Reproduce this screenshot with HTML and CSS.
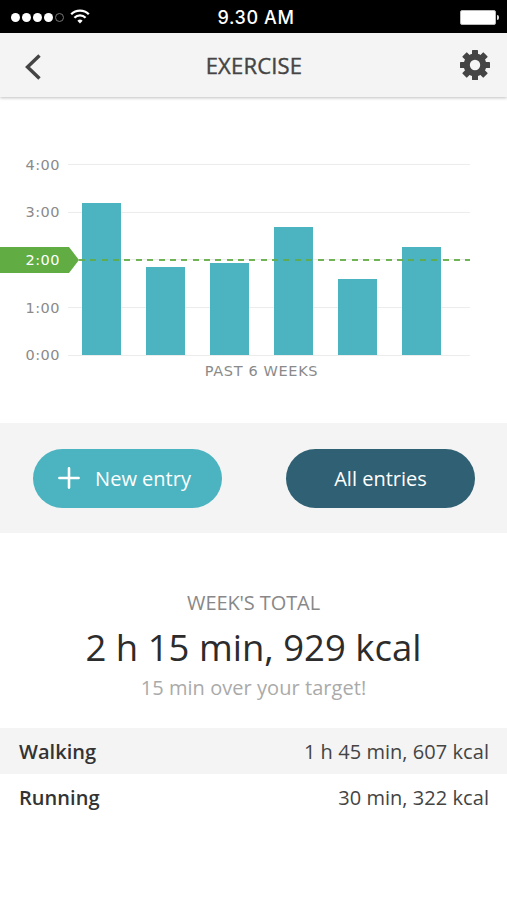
FILE: index.html
```html
<!DOCTYPE html>
<html lang="en">
  <head>
    <meta charset="UTF-8" />
    <meta name="viewport" content="width=device-width, initial-scale=1" />
    <title>Exercise</title>
    <link rel="stylesheet" href="styles.css">
  </head>

  <body>
    <div class="status-bar">
      <div class="signal">
        <i></i><i></i><i></i><i></i><i class="empty"></i>
        <svg class="wifi" width="20" height="15" viewBox="0 0 20 15" fill="none" stroke="#fff" stroke-width="2.3">
          <path d="M1.2 5.2a12.5 12.5 0 0 1 17.6 0" />
          <path d="M4.4 8.7a8 8 0 0 1 11.2 0" />
          <path d="M10 14.4l-2.6-2.7a3.7 3.7 0 0 1 5.2 0z" fill="#fff" stroke="none" />
        </svg>
      </div>
      <div class="clock">9.30 AM</div>
      <div class="battery"></div>
    </div>

    <header>
      <svg class="back" width="18" height="28" viewBox="0 0 18 28" fill="none" stroke="#444" stroke-width="3.4">
        <path d="M15.5 2.5L3.5 14l12 11.5" />
      </svg>
      <h1>Exercise</h1>
      <svg class="settings" width="30" height="30" viewBox="-15 -15 30 30" fill="#444">
        <rect x="-3" y="-15" width="6" height="30" rx="0.6" />
        <rect x="-3.3" y="-15" width="6.6" height="30" rx="0.8" transform="rotate(45)" />
        <rect x="-3" y="-15" width="6" height="30" rx="0.6" transform="rotate(90)" />
        <rect x="-3.3" y="-15" width="6.6" height="30" rx="0.8" transform="rotate(135)" />
        <circle r="11.4" />
        <circle r="5.2" fill="#f4f4f4" />
      </svg>
    </header>

    <section class="chart">
      <div class="plot">
        <div class="tick"><span>4:00</span></div>
        <div class="tick"><span>3:00</span></div>
        <div class="tick"><span></span></div>
        <div class="tick"><span>1:00</span></div>
        <div class="tick"><span>0:00</span></div>
        <div class="bars">
          <div class="bar" style="height: 152px"></div>
          <div class="bar" style="height: 88.5px"></div>
          <div class="bar" style="height: 92.5px"></div>
          <div class="bar" style="height: 128px"></div>
          <div class="bar" style="height: 76.5px"></div>
          <div class="bar" style="height: 108px"></div>
        </div>
        <div class="target">
          <div class="target-tag">2:00</div>
          <div class="target-line"></div>
        </div>
      </div>
      <div class="caption">PAST 6 WEEKS</div>
    </section>

    <div class="actions">
      <button class="new-entry">
        <svg width="22" height="22" viewBox="0 0 22 22" stroke="#fff" stroke-width="2.6" stroke-linecap="round">
          <path d="M11 1.4v19.2M1.4 11h19.2" />
        </svg>
        <span>New entry</span>
      </button>
      <button class="all-entries"><span>All entries</span></button>
    </div>

    <section class="summary">
      <h2>WEEK'S TOTAL</h2>
      <p class="total">2 h 15 min, 929 kcal</p>
      <p class="note">15 min over your target!</p>
    </section>

    <ul class="activities">
      <li><b>Walking</b><span>1 h 45 min, 607 kcal</span></li>
      <li><b>Running</b><span>30 min, 322 kcal</span></li>
    </ul>
  </body>
</html>
```

FILE: styles.css
```css
* {
  box-sizing: border-box;
}

body {
  margin: 0;
  background: #fff;
  color: #333;
  font-family: "Open Sans", sans-serif;
}

.status-bar {
  height: 33px;
  padding: 3px 9px 0 11px;
  display: grid;
  grid-template-columns: 1fr auto 1fr;
  align-items: center;
  background: #000;
  color: #fff;
}

.signal {
  margin-top: -2px;
  display: flex;
  align-items: center;
  gap: 2px;
}

.signal i {
  width: 9px;
  height: 9px;
  border-radius: 50%;
  background: #fff;
}

.signal .empty {
  background: none;
  border: 1px solid #777;
}

.wifi {
  margin: -1px 0 0 4px;
}

.clock {
  font-family: Inter, sans-serif;
  font-size: 18px;
  font-weight: 500;
  line-height: 30px;
  letter-spacing: 0.6px;
  margin-left: 3px;
}

.battery {
  position: relative;
  justify-self: end;
  width: 36px;
  height: 15px;
  margin: -1px 2px 0 0;
  border-radius: 2px;
  background: #fff;
  border: 1px solid #bbb;
}

.battery::after {
  content: "";
  position: absolute;
  right: -4px;
  top: 4px;
  width: 2px;
  height: 5px;
  border-radius: 0 2px 2px 0;
  background: #ddd;
}

header {
  height: 64px;
  padding: 0 17px 0 24px;
  display: flex;
  align-items: center;
  background: #f4f4f4;
  box-shadow: 0 1px 3px rgba(0, 0, 0, 0.25);
}

.back {
  margin-top: 3px;
}

h1 {
  flex: 1;
  margin: 0;
  padding-left: 6px;
  font-size: 22px;
  font-weight: 500;
  text-align: center;
  text-transform: uppercase;
  letter-spacing: 0.2px;
  color: #444;
  -webkit-text-stroke: 0.4px #444;
}

.chart {
  height: 326px;
  padding-top: 44px;
  font-family: "DejaVu Sans", sans-serif;
  font-size: 14.5px;
  color: #8a8a8a;
}

.plot {
  position: relative;
}

.tick {
  height: 47.6px;
  padding: 0 37px 0 25.5px;
  display: flex;
  align-items: center;
  letter-spacing: 0.5px;
}

.tick span {
  width: 42.5px;
}

.tick::after {
  content: "";
  flex: 1;
  height: 1px;
  background: #ececec;
}

.bars {
  position: absolute;
  left: 82px;
  bottom: 23.5px;
  display: flex;
  align-items: flex-end;
  gap: 25.5px;
}

.bar {
  width: 38.5px;
  background: #4bb4c0;
}

.target {
  position: absolute;
  top: 106px;
  left: 0;
  width: 470px;
  display: flex;
  align-items: center;
}

.target-tag {
  width: 79px;
  padding-left: 25.5px;
  line-height: 26px;
  letter-spacing: 0.5px;
  background: #61ac43;
  color: #fff;
  clip-path: polygon(0 0, 69px 0, 100% 50%, 69px 100%, 0 100%);
}

.target-line {
  flex: 1;
  height: 2px;
  background: repeating-linear-gradient(to right, #61ac43 0 6px, transparent 6px 11.36px);
  opacity: 0.9;
}

.caption {
  margin: -17px 0 0 16px;
  line-height: 18px;
  letter-spacing: 0.65px;
  text-align: center;
}

.actions {
  height: 110px;
  padding: 0 32px 0 33px;
  display: flex;
  align-items: center;
  justify-content: space-between;
  background: #f4f4f4;
}

button {
  width: 189px;
  height: 59px;
  padding: 0;
  display: flex;
  align-items: center;
  justify-content: center;
  gap: 15px;
  border: none;
  border-radius: 30px;
  font: 20px "Open Sans", sans-serif;
  color: #fff;
}

.new-entry {
  padding-right: 6px;
  background: #4bb4c0;
}

.all-entries {
  background: #2f6073;
}

.summary {
  height: 195px;
  padding-top: 56px;
  text-align: center;
}

h2 {
  margin: 0;
  font-size: 20px;
  font-weight: 400;
  line-height: 28px;
  letter-spacing: -0.1px;
  color: #888;
}

.total {
  margin: 4px 0 0;
  font-size: 36.5px;
  line-height: 52px;
  color: #2c2c2c;
}

.note {
  margin: 1px 0 0;
  font-size: 20px;
  line-height: 28px;
  letter-spacing: 0.05px;
  color: #aaa;
}

.activities {
  margin: 0;
  padding: 0;
  list-style: none;
}

.activities li {
  height: 46px;
  padding: 0 18px 0 19px;
  display: flex;
  align-items: center;
  justify-content: space-between;
  font-size: 20px;
  letter-spacing: 0.05px;
  color: #444;
}

.activities li:nth-child(odd) {
  background: #f4f4f4;
}

.activities b {
  font-weight: 600;
  color: #333;
}
```
